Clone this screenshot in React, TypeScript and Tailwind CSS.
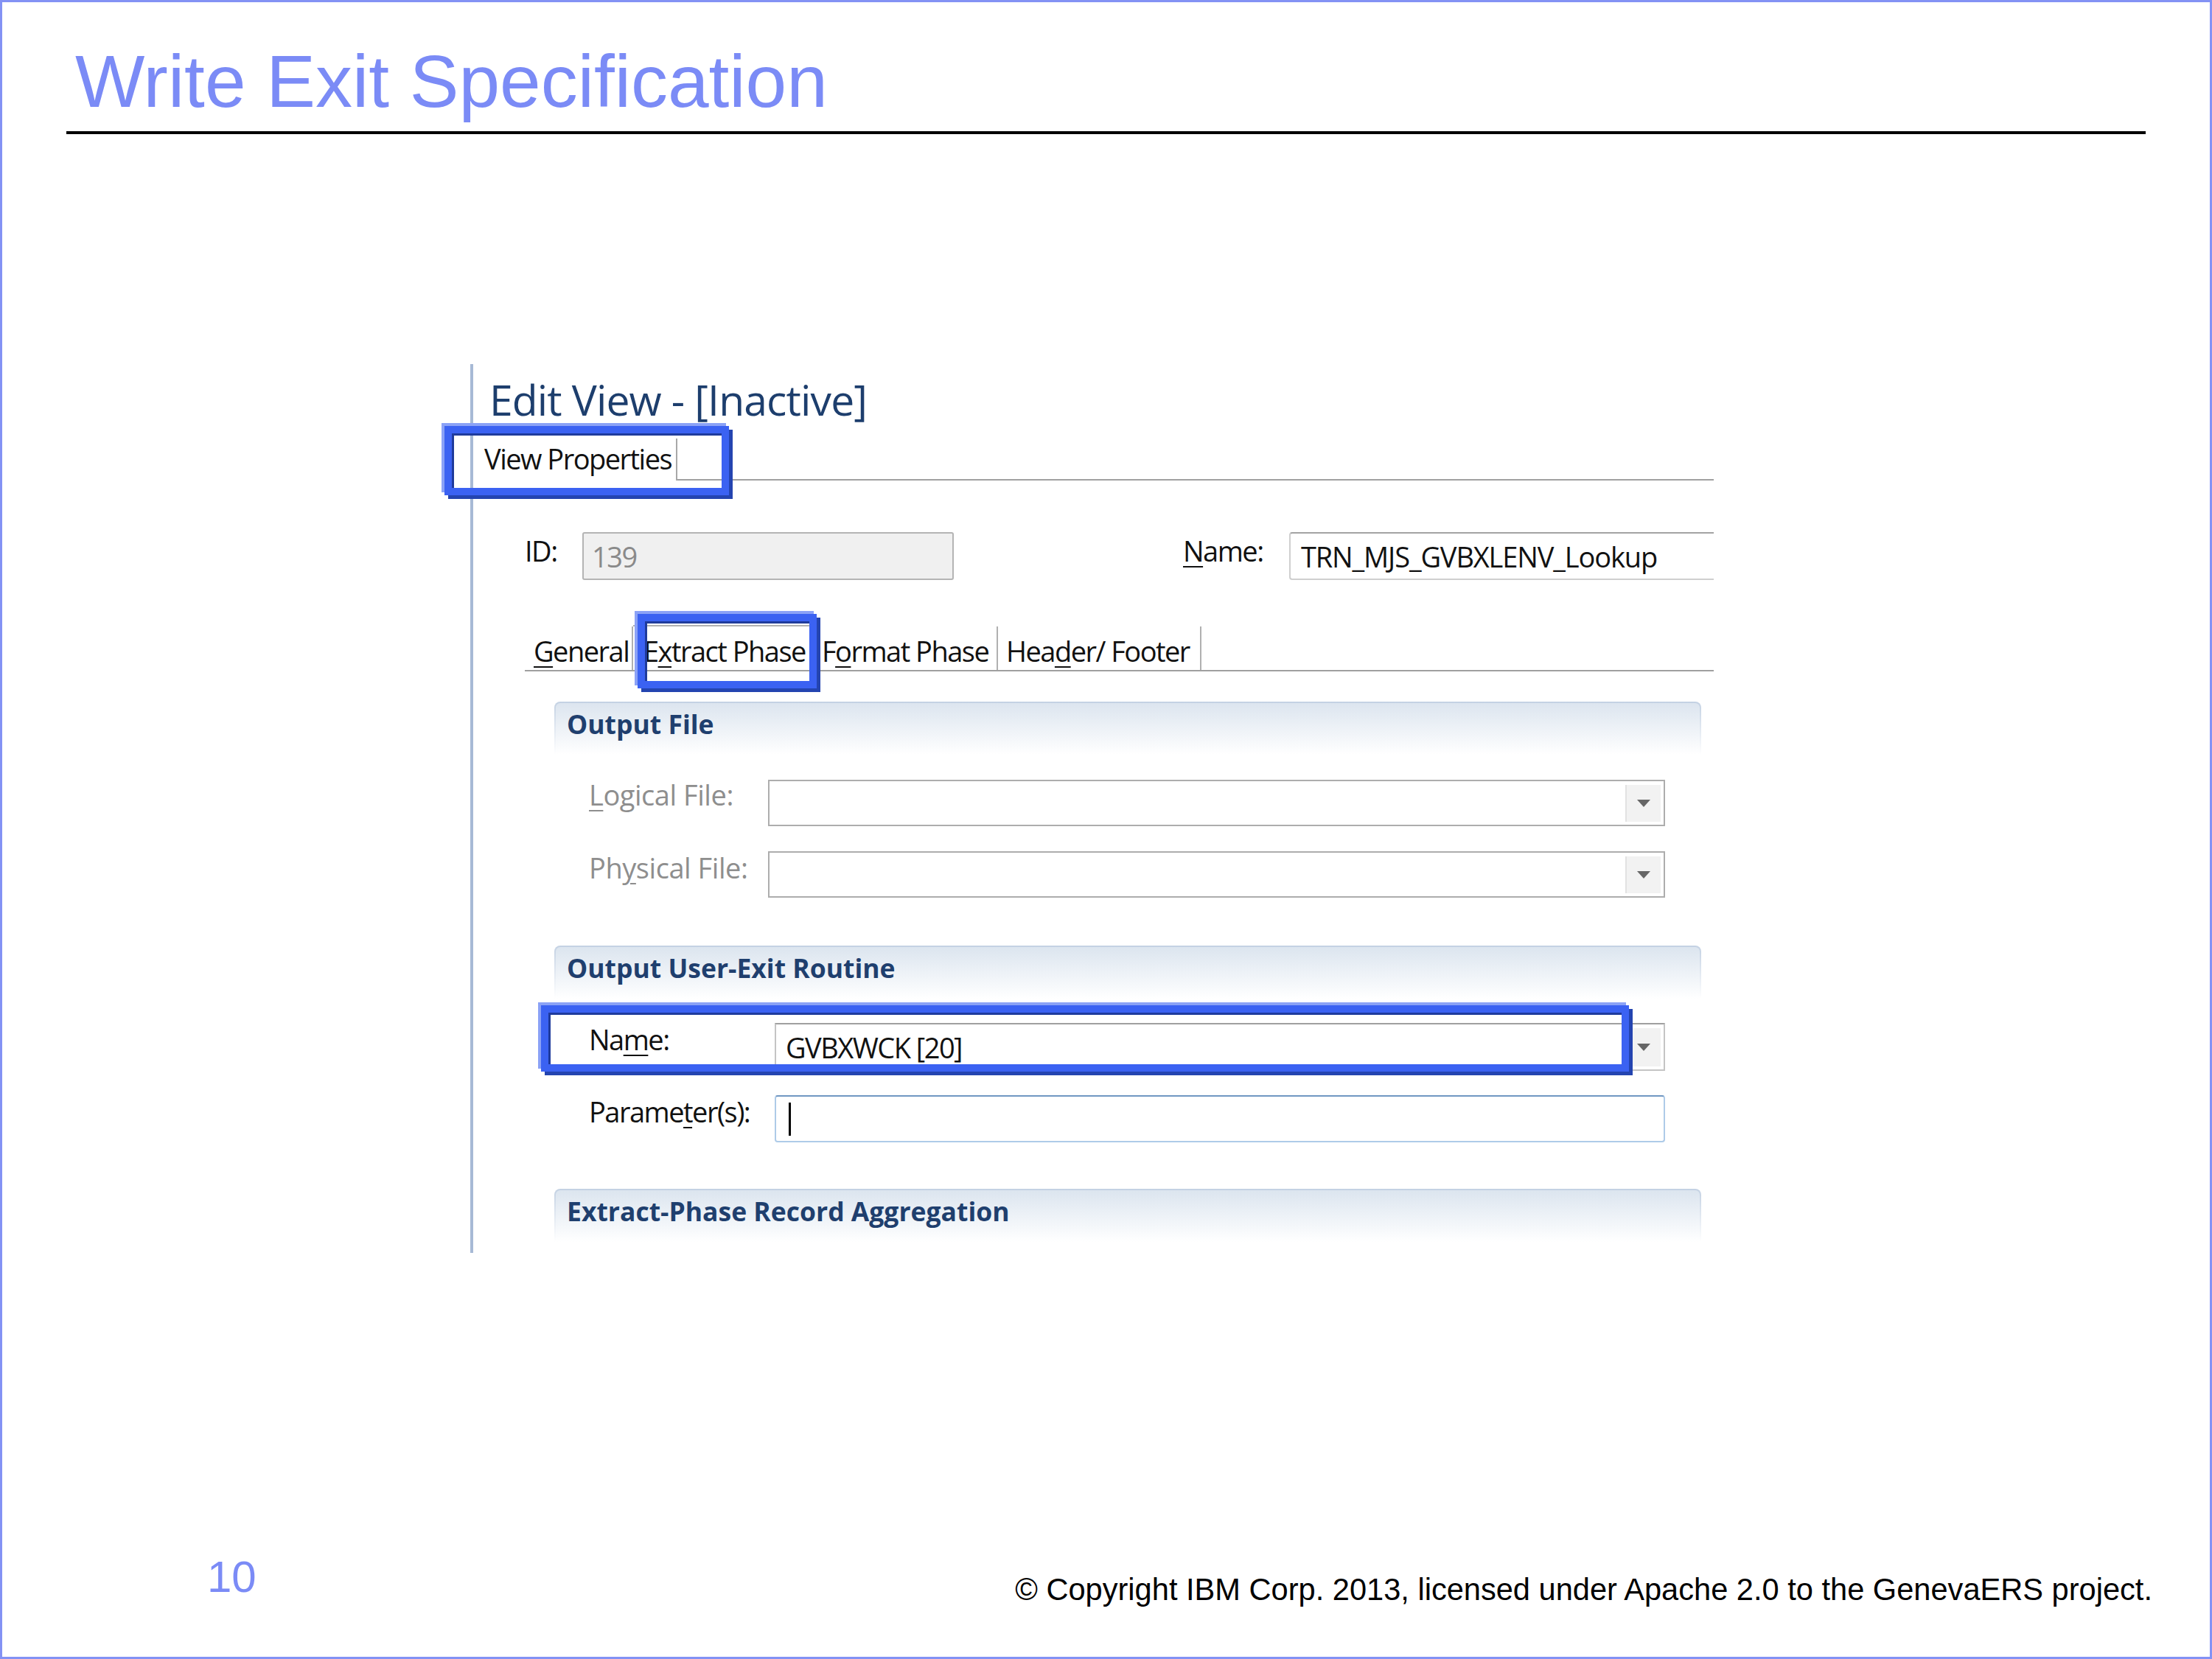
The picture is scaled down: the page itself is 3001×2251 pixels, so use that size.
import React from 'react';

function Arrow({ h }: { h: string }) {
  return (
    <div className={`flex w-[48px] ${h} items-center justify-center border-l-2 border-[#e2e2e2] bg-[#f2f2f2]`}>
      <svg width="18" height="10" viewBox="0 0 18 10">
        <path d="M0 0h18L9 10z" fill="#666666" />
      </svg>
    </div>
  );
}

function Highlight({ pos }: { pos: string }) {
  return (
    <div
      className={`pointer-events-none absolute border-[10px] border-[#3b62f2] shadow-[inset_3px_3px_0_#1f3b9c,-4px_-4px_0_#8ba2f6,5px_5px_0_#2444b0] ${pos}`}
    />
  );
}

function SectionHeader({ title }: { title: string }) {
  return (
    <div className="h-[72px] rounded-t-[8px] bg-gradient-to-b from-[#c3d1e3] to-transparent px-[2px] pt-[2px]">
      <div className="h-full rounded-t-[6px] bg-gradient-to-b from-[#dce5ef] to-white pl-[15px] pt-[11px] text-[35.5px] font-bold leading-[35px] tracking-[0em] text-[#1f3f6e]">
        {title}
      </div>
    </div>
  );
}

export default function App() {
  return (
    <div className="flex h-[2251px] w-[3001px] flex-col border-[3px] border-[#8392f4] bg-white font-['Liberation_Sans',Arial,sans-serif]">
      <h1 className="ml-[99px] mt-[57px] text-[100px] leading-none text-[#7b8bf6]">Write Exit Specification</h1>
      <div className="ml-[87px] mt-[18px] h-[4px] w-[2821px] bg-black" />

      {/* dialog screenshot */}
      <div className="relative ml-[635px] mt-[312px] h-[1206px] w-[1687px] border-l-4 border-[#a7b9d5] font-['Open_Sans','Noto_Sans',sans-serif] text-[#111]">
        <div className="pl-[22px] pt-[20px] text-[57px] leading-[57px] tracking-[-0.015em] text-[#1d3e6d]">
          Edit View - [Inactive]
        </div>

        <div className="mt-[24px] flex h-[57px] text-[38px] leading-[38px] tracking-[-0.04em]">
          <div className="w-[277px] border-r-2 border-[#a8a8a8] pl-[15px] pt-[8px]">View Properties</div>
          <div className="flex-1 border-b-2 border-[#a0a0a0]" />
        </div>

        <div className="mt-[70px] flex items-start text-[38px] leading-[38px] tracking-[-0.04em]">
          <span className="ml-[70px] mt-[6px] w-[78px]">ID:</span>
          <div className="flex h-[65px] w-[504px] items-center rounded-[3px] border-2 border-[#b4b4b4] bg-[#f0f0f0] pl-[11px] text-[#8a8a8a]">
            139
          </div>
          <span className="ml-[311px] mt-[6px] w-[144px]">
            <u className="decoration-2 underline-offset-[6px]">N</u>ame:
          </span>
          <div className="flex h-[65px] flex-1 items-center rounded-l-[4px] border-y-2 border-l-2 border-[#cfcfcf] border-t-[#a3a3a3] pl-[14px] tracking-[-0.03em]">
            TRN_MJS_GVBXLENV_Lookup
          </div>
        </div>

        <div className="ml-[70px] mt-[61px] flex h-[63px] border-b-2 border-[#a0a0a0] text-[38px] leading-[38px] tracking-[-0.04em]">
          <div className="mt-[2px] w-[147px] border-r-2 border-[#b0b0b0] pl-[12px] pt-[14px]">
            <u className="decoration-2 underline-offset-[6px]">G</u>eneral
          </div>
          <div className="w-[245px] border-r-2 border-t-2 border-[#b0b0b0] pl-[14px] pt-[14px]">
            E<u className="decoration-2 underline-offset-[6px]">x</u>tract Phase
          </div>
          <div className="mt-[2px] w-[250px] border-r-2 border-[#b0b0b0] pl-[11px] pt-[14px]">
            F<u className="decoration-2 underline-offset-[6px]">o</u>rmat Phase
          </div>
          <div className="mt-[2px] w-[276px] border-r-2 border-[#b0b0b0] pl-[11px] pt-[14px]">
            Hea<u className="decoration-2 underline-offset-[6px]">d</u>er/ Footer
          </div>
        </div>

        <div className="ml-[110px] mt-[41px] w-[1556px] text-[38px] leading-[38px] tracking-[-0.04em]">
          <SectionHeader title="Output File" />
          <div className="mt-[34px] flex items-start pl-[47px]">
            <span className="mt-[1px] w-[243px] tracking-[-0.012em] text-[#8e8e8e]">
              <u className="decoration-2 underline-offset-[6px]">L</u>ogical File:
            </span>
            <div className="flex h-[63px] w-[1217px] items-center justify-end border-2 border-[#adadad] pr-[4px]">
              <Arrow h="h-[50px]" />
            </div>
          </div>
          <div className="mt-[34px] flex items-start pl-[47px]">
            <span className="mt-[3px] w-[243px] tracking-[-0.012em] text-[#8e8e8e]">
              Ph<u className="decoration-2 underline-offset-[6px]">y</u>sical File:
            </span>
            <div className="flex h-[63px] w-[1217px] items-center justify-end border-2 border-[#adadad] pr-[4px]">
              <Arrow h="h-[50px]" />
            </div>
          </div>

          <div className="mt-[65px]">
            <SectionHeader title="Output User-Exit Routine" />
          </div>
          <div className="mt-[33px] flex items-start pl-[47px]">
            <span className="mt-[3px] w-[252px]">
              Na<u className="decoration-2 underline-offset-[6px]">m</u>e:
            </span>
            <div className="flex h-[65px] w-[1208px] items-center border-2 border-[#c4c4c4] border-t-[#a0a0a0] pl-[13px] pr-[4px]">
              <span className="flex-1">GVBXWCK [20]</span>
              <Arrow h="h-[52px]" />
            </div>
          </div>
          <div className="mt-[33px] flex items-start pl-[47px]">
            <span className="mt-[3px] w-[252px]">
              Parame<u className="decoration-2 underline-offset-[6px]">t</u>er(s):
            </span>
            <div className="flex h-[64px] w-[1208px] items-center rounded-[4px] border-2 border-[#aecbe8] border-t-[#7097c2] pl-[17px]">
              <div className="h-[45px] w-[3px] bg-black" />
            </div>
          </div>

          <div className="mt-[63px]">
            <SectionHeader title="Extract-Phase Record Aggregation" />
          </div>
        </div>

        <Highlight pos="left-[-39px] top-[84px] h-[94px] w-[386px]" />
        <Highlight pos="left-[223px] top-[339px] h-[101px] w-[243px]" />
        <Highlight pos="left-[92px] top-[870px] h-[90px] w-[1476px]" />
      </div>

      <div className="mb-[70px] mt-auto flex items-start">
        <span className="ml-[278px] text-[60px] leading-[60px] text-[#7b8bf6]">10</span>
        <span className="ml-auto mr-[78px] mt-[26px] text-[41.6px] leading-[42px] text-black">
          © Copyright IBM Corp. 2013, licensed under Apache 2.0 to the GenevaERS project.
        </span>
      </div>
    </div>
  );
}
